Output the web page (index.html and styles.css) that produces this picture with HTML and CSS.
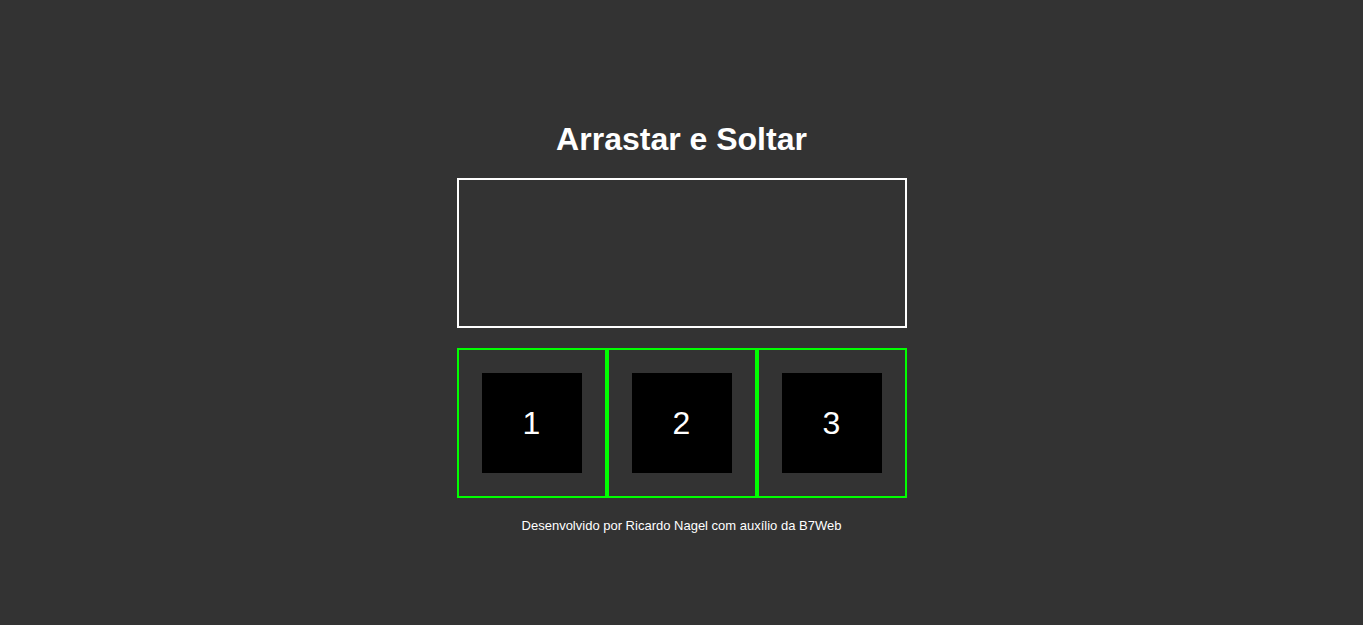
FILE: index.html
```html
<!DOCTYPE html>
<html lang="pt-BR">
<head>
<meta charset="utf-8">
<title>Arrastar e Soltar</title>
<link rel="stylesheet" href="styles.css">
</head>
<body>
<main class="container">
  <h1 class="title">Arrastar e Soltar</h1>
  <div class="neutral-area"></div>
  <div class="areas">
    <div class="area"><div class="item">1</div></div>
    <div class="area"><div class="item">2</div></div>
    <div class="area"><div class="item">3</div></div>
  </div>
  <footer class="footer">Desenvolvido por Ricardo Nagel com auxílio da B7Web</footer>
</main>
</body>
</html>
```
FILE: styles.css
```css
html, body {
  margin: 0;
  padding: 0;
  background: #333333;
  color: #ffffff;
  font-family: "Liberation Sans", Arial, sans-serif;
}
.container {
  width: 450px;
  margin: 0 auto;
  padding-top: 121px;
}
.title {
  margin: 0 0 20px 0;
  font-size: 32px;
  font-weight: bold;
  text-align: center;
  line-height: 37px;
}
.neutral-area {
  box-sizing: border-box;
  height: 150px;
  border: 2px solid #ffffff;
}
.areas {
  display: flex;
  margin-top: 20px;
}
.area {
  box-sizing: border-box;
  width: 150px;
  height: 150px;
  border: 2px solid #00ff00;
  display: flex;
  align-items: center;
  justify-content: center;
}
.item {
  width: 100px;
  height: 100px;
  background: #000000;
  display: flex;
  align-items: center;
  justify-content: center;
  font-size: 32px;
}
.footer {
  margin-top: 20px;
  text-align: center;
  font-size: 13px;
  line-height: 15px;
}
```
